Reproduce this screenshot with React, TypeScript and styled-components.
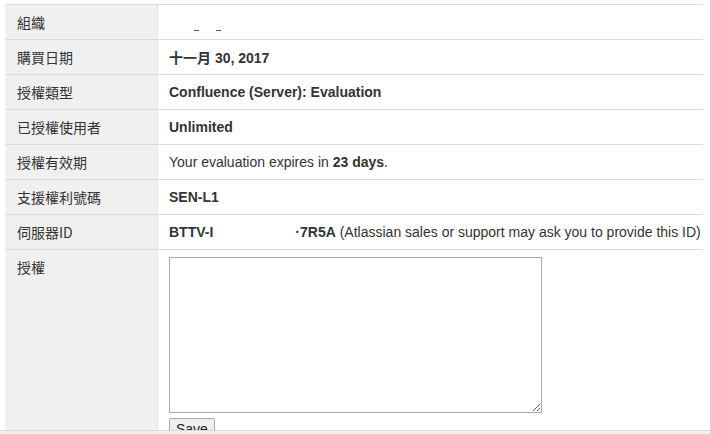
import React from "react";
import styled, { createGlobalStyle } from "styled-components";

const Global = createGlobalStyle`
  html, body { margin: 0; padding: 0; background: #fff; }
  body { font-family: Arial, "Liberation Sans", "Noto Sans CJK TC", sans-serif; color: #333; }
`;

const Page = styled.div`
  width: 710px;
  height: 434px;
  display: flex;
  flex-direction: column;
  overflow: hidden;
`;

const Scroll = styled.div`
  flex: 1;
  overflow: hidden;
  padding: 4px 0 0 5px;
`;

const Footer = styled.div`
  height: 3px;
  background: #f0f0f0;
  border-top: 1px solid #d9d9d9;
`;

const Table = styled.div`
  width: 698px;
  display: grid;
  grid-template-columns: 153px 1fr;
  border-top: 1px solid #dcdcdc;
`;

const Label = styled.div<{ $top?: boolean }>`
  background: #f0f0f0;
  border-right: 1px solid #e4e4e4;
  border-bottom: 1px solid #dcdcdc;
  padding: ${(p) => (p.$top ? "7px 0 0 12px" : "0 0 0 12px")};
  font-family: "Noto Sans CJK TC", "Liberation Sans", sans-serif;
  font-size: 14px;
  color: #333;
  display: flex;
  align-items: ${(p) => (p.$top ? "flex-start" : "center")};
  box-sizing: border-box;
  height: ${(p) => (p.$top ? "auto" : "35px")};
`;

const Value = styled.div<{ $tall?: boolean }>`
  border-bottom: ${(p) => (p.$tall ? "none" : "1px solid #dcdcdc")};
  height: ${(p) => (p.$tall ? "auto" : "35px")};
  box-sizing: border-box;
  padding: ${(p) => (p.$tall ? "7px 0 0 11px" : "0 0 0 11px")};
  display: flex;
  font-family: Arial, "Liberation Sans", "Noto Sans CJK TC", sans-serif;
  font-size: 14px;
  color: #333;
  white-space: nowrap;
  flex-direction: ${(p) => (p.$tall ? "column" : "row")};
  align-items: ${(p) => (p.$tall ? "flex-start" : "center")};
`;

const Strong = styled.b`
  font-weight: bold;
`;

const Redacted = styled.span<{ $w: number }>`
  display: inline-block;
  width: ${(p) => p.$w}px;
`;

const Faint = styled.span`
  display: inline-block;
  width: 60px;
  height: 12px;
  position: relative;
  margin-left: 14px;
  margin-top: 18px;
  &::before, &::after {
    content: "";
    position: absolute;
    top: 5px;
    width: 5px;
    height: 1px;
    background: #555;
  }
  &::before { left: 11px; }
  &::after { left: 33px; }
`;

const TextArea = styled.textarea`
  width: 373px;
  height: 156px;
  box-sizing: border-box;
  border: 1px solid #a9a9a9;
  resize: both;
  font-family: "Liberation Mono", monospace;
  margin: 0;
`;

const Button = styled.button`
  margin-top: 5px;
  font-family: Arial, "Liberation Sans", sans-serif;
  font-size: 14px;
  color: #222;
  padding: 2px 6px;
  background: #efefef;
  border: 1px solid #aaa;
  border-radius: 2px;
`;

export default function App() {
  return (
    <Page>
      <Global />
      <Scroll>
        <Table>
          <Label>組織</Label>
          <Value>
            <Faint />
          </Value>
          <Label>購買日期</Label>
          <Value>
            <Strong>十一月 30, 2017</Strong>
          </Value>
          <Label>授權類型</Label>
          <Value>
            <Strong>Confluence (Server): Evaluation</Strong>
          </Value>
          <Label>已授權使用者</Label>
          <Value>
            <Strong>Unlimited</Strong>
          </Value>
          <Label>授權有效期</Label>
          <Value>
            <span>
              Your evaluation expires in <Strong>23 days</Strong>.
            </span>
          </Value>
          <Label>支援權利號碼</Label>
          <Value>
            <Strong>SEN-L1</Strong>
          </Value>
          <Label>伺服器ID</Label>
          <Value>
            <span>
              <Strong>BTTV-I</Strong>
              <Redacted $w={82} />
              <Strong>·7R5A</Strong> (Atlassian sales or support may ask you to provide this ID)
            </span>
          </Value>
          <Label $top>授權</Label>
          <Value $tall>
            <TextArea />
            <Button>Save</Button>
          </Value>
        </Table>
      </Scroll>
      <Footer />
    </Page>
  );
}
